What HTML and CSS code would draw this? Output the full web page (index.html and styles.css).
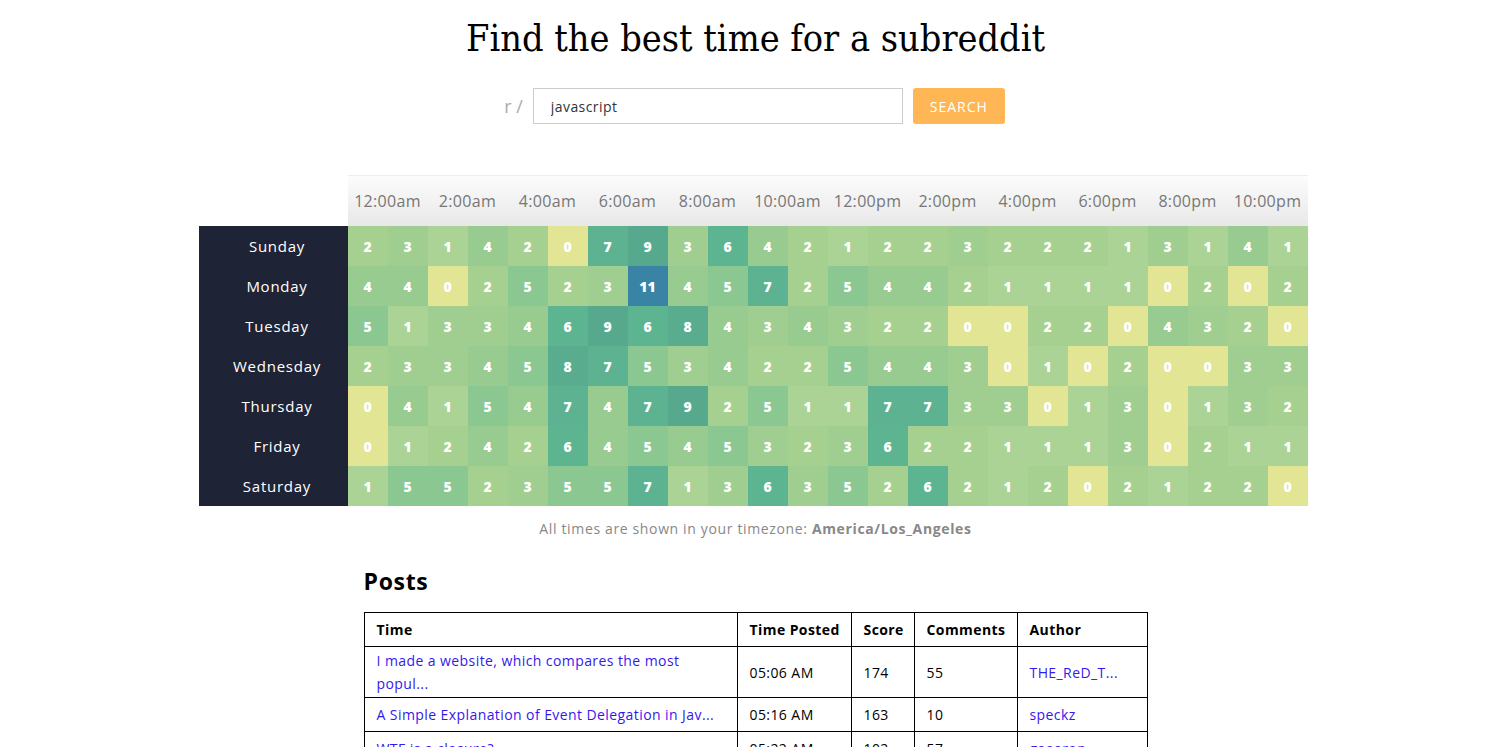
FILE: index.html
```html
<!DOCTYPE html>
<html>
<head>
<meta charset="utf-8">
<title>Find the best time for a subreddit</title>
<link rel="stylesheet" href="styles.css">
</head>
<body>
<h1 class="title">Find the best time for a subreddit</h1>
<form class="search">
  <span class="prefix">r /</span>
  <input class="sub-input" type="text" value="javascript">
  <button class="search-btn" type="button">Search</button>
</form>

<div class="heatmap">
  <div class="corner"></div>
  <div class="hour">12:00am</div><div class="hour">2:00am</div><div class="hour">4:00am</div><div class="hour">6:00am</div><div class="hour">8:00am</div><div class="hour">10:00am</div><div class="hour">12:00pm</div><div class="hour">2:00pm</div><div class="hour">4:00pm</div><div class="hour">6:00pm</div><div class="hour">8:00pm</div><div class="hour">10:00pm</div>

  <div class="day">Sunday</div>
  <div class="c v2">2</div><div class="c v3">3</div><div class="c v1">1</div><div class="c v4">4</div><div class="c v2">2</div><div class="c v0">0</div><div class="c v7">7</div><div class="c v9">9</div><div class="c v3">3</div><div class="c v6">6</div><div class="c v4">4</div><div class="c v2">2</div><div class="c v1">1</div><div class="c v2">2</div><div class="c v2">2</div><div class="c v3">3</div><div class="c v2">2</div><div class="c v2">2</div><div class="c v2">2</div><div class="c v1">1</div><div class="c v3">3</div><div class="c v1">1</div><div class="c v4">4</div><div class="c v1">1</div>

  <div class="day">Monday</div>
  <div class="c v4">4</div><div class="c v4">4</div><div class="c v0">0</div><div class="c v2">2</div><div class="c v5">5</div><div class="c v2">2</div><div class="c v3">3</div><div class="c v11">11</div><div class="c v4">4</div><div class="c v5">5</div><div class="c v7">7</div><div class="c v2">2</div><div class="c v5">5</div><div class="c v4">4</div><div class="c v4">4</div><div class="c v2">2</div><div class="c v1">1</div><div class="c v1">1</div><div class="c v1">1</div><div class="c v1">1</div><div class="c v0">0</div><div class="c v2">2</div><div class="c v0">0</div><div class="c v2">2</div>

  <div class="day">Tuesday</div>
  <div class="c v5">5</div><div class="c v1">1</div><div class="c v3">3</div><div class="c v3">3</div><div class="c v4">4</div><div class="c v6">6</div><div class="c v9">9</div><div class="c v6">6</div><div class="c v8">8</div><div class="c v4">4</div><div class="c v3">3</div><div class="c v4">4</div><div class="c v3">3</div><div class="c v2">2</div><div class="c v2">2</div><div class="c v0">0</div><div class="c v0">0</div><div class="c v2">2</div><div class="c v2">2</div><div class="c v0">0</div><div class="c v4">4</div><div class="c v3">3</div><div class="c v2">2</div><div class="c v0">0</div>

  <div class="day">Wednesday</div>
  <div class="c v2">2</div><div class="c v3">3</div><div class="c v3">3</div><div class="c v4">4</div><div class="c v5">5</div><div class="c v8">8</div><div class="c v7">7</div><div class="c v5">5</div><div class="c v3">3</div><div class="c v4">4</div><div class="c v2">2</div><div class="c v2">2</div><div class="c v5">5</div><div class="c v4">4</div><div class="c v4">4</div><div class="c v3">3</div><div class="c v0">0</div><div class="c v1">1</div><div class="c v0">0</div><div class="c v2">2</div><div class="c v0">0</div><div class="c v0">0</div><div class="c v3">3</div><div class="c v3">3</div>

  <div class="day">Thursday</div>
  <div class="c v0">0</div><div class="c v4">4</div><div class="c v1">1</div><div class="c v5">5</div><div class="c v4">4</div><div class="c v7">7</div><div class="c v4">4</div><div class="c v7">7</div><div class="c v9">9</div><div class="c v2">2</div><div class="c v5">5</div><div class="c v1">1</div><div class="c v1">1</div><div class="c v7">7</div><div class="c v7">7</div><div class="c v3">3</div><div class="c v3">3</div><div class="c v0">0</div><div class="c v1">1</div><div class="c v3">3</div><div class="c v0">0</div><div class="c v1">1</div><div class="c v3">3</div><div class="c v2">2</div>

  <div class="day">Friday</div>
  <div class="c v0">0</div><div class="c v1">1</div><div class="c v2">2</div><div class="c v4">4</div><div class="c v2">2</div><div class="c v6">6</div><div class="c v4">4</div><div class="c v5">5</div><div class="c v4">4</div><div class="c v5">5</div><div class="c v3">3</div><div class="c v2">2</div><div class="c v3">3</div><div class="c v6">6</div><div class="c v2">2</div><div class="c v2">2</div><div class="c v1">1</div><div class="c v1">1</div><div class="c v1">1</div><div class="c v3">3</div><div class="c v0">0</div><div class="c v2">2</div><div class="c v1">1</div><div class="c v1">1</div>

  <div class="day">Saturday</div>
  <div class="c v1">1</div><div class="c v5">5</div><div class="c v5">5</div><div class="c v2">2</div><div class="c v3">3</div><div class="c v5">5</div><div class="c v5">5</div><div class="c v7">7</div><div class="c v1">1</div><div class="c v3">3</div><div class="c v6">6</div><div class="c v3">3</div><div class="c v5">5</div><div class="c v2">2</div><div class="c v6">6</div><div class="c v2">2</div><div class="c v1">1</div><div class="c v2">2</div><div class="c v0">0</div><div class="c v2">2</div><div class="c v1">1</div><div class="c v2">2</div><div class="c v2">2</div><div class="c v0">0</div>
</div>

<p class="tz">All times are shown in your timezone: <b>America/Los_Angeles</b></p>

<section class="posts">
  <h2 class="posts-title">Posts</h2>
  <table class="posts-table">
    <colgroup>
      <col class="col-time"><col class="col-posted"><col class="col-score"><col class="col-comments"><col class="col-author">
    </colgroup>
    <thead>
      <tr><th>Time</th><th>Time Posted</th><th>Score</th><th>Comments</th><th>Author</th></tr>
    </thead>
    <tbody>
      <tr><td><a class="link" href="#">I made a website, which compares the most popul...</a></td><td>05:06 AM</td><td>174</td><td>55</td><td><a class="link" href="#">THE_ReD_T...</a></td></tr>
      <tr><td><a class="link" href="#">A Simple Explanation of Event Delegation in Jav...</a></td><td>05:16 AM</td><td>163</td><td>10</td><td><a class="link" href="#">speckz</a></td></tr>
      <tr><td><a class="link" href="#">WTF is a closure?</a></td><td>05:22 AM</td><td>102</td><td>57</td><td><a class="link" href="#">gaearon</a></td></tr>
    </tbody>
  </table>
</section>
</body>
</html>
```

FILE: styles.css
```css
html, body {
  margin: 0;
  padding: 0;
  background: #fff;
}
body {
  font-family: "Open Sans", "DejaVu Sans", sans-serif;
  letter-spacing: 0.04em;
  color: #000;
}
.title {
  font-family: "DejaVu Serif", serif;
  font-stretch: condensed;
  font-weight: normal;
  font-size: 37.5px;
  letter-spacing: 0;
  line-height: 48px;
  text-align: center;
  margin: 14px 0 0;
  padding-left: 6px;
}
.search {
  display: flex;
  justify-content: center;
  align-items: center;
  margin: 26px 0 0;
  padding-left: 4px;
}
.prefix {
  color: #aaa;
  font-size: 18px;
  letter-spacing: 0;
  margin-right: 10px;
}
.sub-input {
  box-sizing: border-box;
  width: 370px;
  height: 36px;
  border: 1px solid #ccc;
  border-radius: 0;
  padding: 0 17px;
  font-family: inherit;
  font-size: 14px;
  letter-spacing: 0.03em;
  color: #333;
  outline: none;
}
.search-btn {
  box-sizing: border-box;
  width: 92px;
  height: 36px;
  margin-left: 10px;
  border: 0;
  border-radius: 3px;
  background: #ffb655;
  color: #fff;
  font-family: inherit;
  font-size: 14px;
  letter-spacing: 0.07em;
  text-transform: uppercase;
}
.heatmap {
  display: grid;
  grid-template-columns: 149px repeat(24, 40px);
  grid-template-rows: 51px repeat(7, 40px);
  width: 1109px;
  margin: 51px auto 0;
  padding-left: 1px;
}
.hour {
  grid-column: span 2;
  display: flex;
  align-items: center;
  justify-content: center;
  box-sizing: border-box;
  border-top: 1px solid #eee;
  background: linear-gradient(#fcfcfc, #e8e8e8);
  color: #777;
  font-size: 16px;
  letter-spacing: 0.02em;
}
.day {
  background: #1f2336;
  color: #fff;
  font-size: 15px;
  letter-spacing: 0.05em;
  display: flex;
  align-items: center;
  justify-content: center;
  padding-left: 8px;
}
.c {
  display: flex;
  align-items: center;
  justify-content: center;
  color: #fff;
  font-weight: 800;
  font-size: 14px;
  letter-spacing: 0;
}
.v0 { background: #e1e594; }
.v1 { background: #aad395; }
.v2 { background: #a6d090; }
.v3 { background: #9fce90; }
.v4 { background: #97cb90; }
.v5 { background: #8ac791; }
.v6 { background: #5db490; }
.v7 { background: #5cb291; }
.v8 { background: #59ad8e; }
.v9 { background: #56a98d; }
.v11 { background: #3983a5; }
.tz {
  text-align: center;
  color: #888;
  font-size: 14px;
  margin: 13px 0 0;
  padding-left: 6px;
}
.tz b {
  font-weight: 700;
}
.posts {
  width: 783px;
  margin: 27px auto 0;
  padding-left: 5px;
}
.posts-title {
  font-size: 23px;
  font-weight: 700;
  letter-spacing: 0.03em;
  margin: 0 0 15px 0;
}
.posts-table {
  border-collapse: collapse;
  table-layout: fixed;
  width: 783px;
  font-size: 14px;
  letter-spacing: 0.03em;
}
.col-time { width: 373px; }
.col-posted { width: 114px; }
.col-score { width: 63px; }
.col-comments { width: 103px; }
.col-author { width: 130px; }
.posts-table th, .posts-table td {
  border: 1px solid #000;
  text-align: left;
  padding: 0 6px 0 12px;
}
.posts-table th {
  height: 33px;
  font-weight: 700;
  white-space: nowrap;
}
.posts-table td {
  height: 34px;
  line-height: 23px;
  padding-top: 2px;
  padding-bottom: 2px;
  box-sizing: border-box;
}
.link {
  color: #3518ee;
  text-decoration: none;
}
```
